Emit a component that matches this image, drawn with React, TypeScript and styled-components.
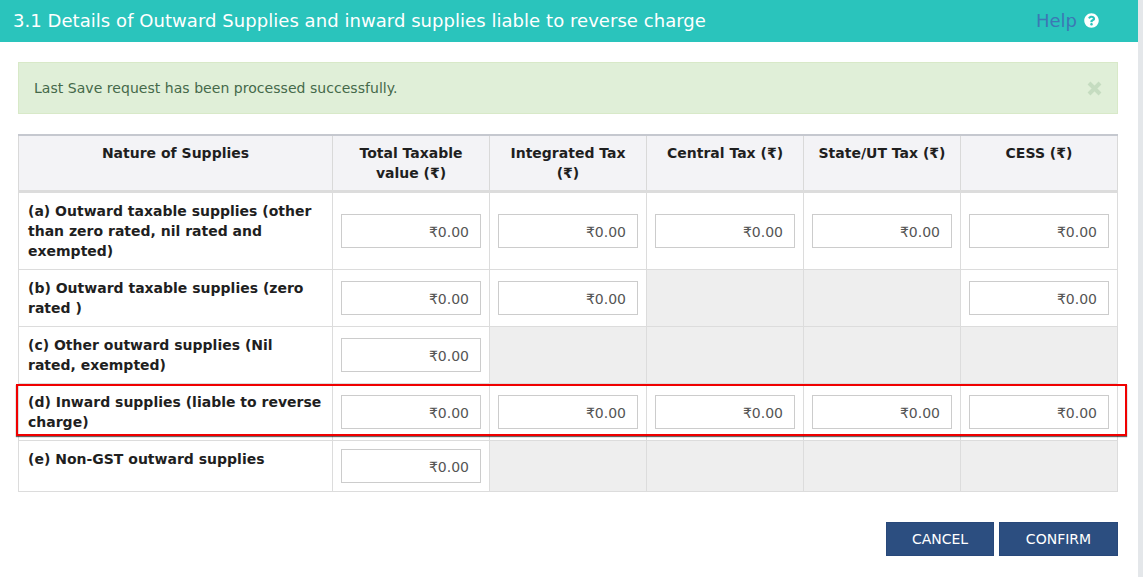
import React from 'react';
import styled, { createGlobalStyle } from 'styled-components';
import { FaQuestionCircle } from 'react-icons/fa';

const GlobalStyle = createGlobalStyle`
  html, body {
    margin: 0;
    padding: 0;
    background: #e4e7ea;
    overflow: hidden;
  }
  body {
    font-family: "DejaVu Sans", Verdana, sans-serif;
    color: #1f1f1f;
  }
`;

const Modal = styled.div`
  position: relative;
  width: 1138px;
  height: 577px;
  background: #fff;
`;

const Header = styled.div`
  height: 42px;
  box-sizing: border-box;
  padding: 0 39px 2px 13px;
  background: #2ac4bc;
  display: flex;
  align-items: center;
  justify-content: space-between;
`;

const Title = styled.h3`
  margin: 0;
  font-size: 18px;
  letter-spacing: 0.05px;
  font-weight: 400;
  color: #fff;
`;

const Help = styled.a`
  display: flex;
  align-items: center;
  gap: 7px;
  font-size: 18px;
  color: #3c78b4;
  svg {
    color: #fff;
  }
`;

const Body = styled.div`
  padding: 20px 20px 0 18px;
`;

const Alert = styled.div`
  height: 52px;
  box-sizing: border-box;
  display: flex;
  align-items: center;
  justify-content: space-between;
  padding: 0 15px;
  background: #e0efd8;
  border: 1px solid #d8e9c8;
  color: #45694a;
  font-size: 14px;
  letter-spacing: 0.04px;
`;

const Table = styled.table`
  margin-top: 20px;
  width: 1099px;
  border-collapse: collapse;
  table-layout: fixed;
  font-size: 14px;
`;

const Head = styled.th`
  height: 56px;
  box-sizing: border-box;
  vertical-align: top;
  padding: 7px 8px 0;
  line-height: 20px;
  font-weight: 700;
  background: #f3f3f6;
  border: 1px solid #d9d9d9;
  border-top: 2px solid #c5c8cf;
  border-bottom: 3px solid #dcdcdc;
`;

const Row = styled.tr<{ $height: number }>`
  height: ${p => p.$height}px;
`;

const Label = styled.td`
  box-sizing: border-box;
  vertical-align: top;
  padding: 8px 7px 0 9px;
  line-height: 20px;
  font-weight: 700;
  border: 1px solid #dcdcdc;
`;

const Cell = styled.td<{ $off?: boolean }>`
  box-sizing: border-box;
  vertical-align: middle;
  padding: 0 8px;
  border: 1px solid #dcdcdc;
  background: ${p => (p.$off ? '#eeeeee' : '#fff')};
`;

const Amount = styled.input`
  display: block;
  box-sizing: border-box;
  width: 140px;
  height: 34px;
  padding: 2px 11px 0;
  border: 1px solid #cccccc;
  background: #fff;
  text-align: right;
  font-family: inherit;
  font-size: 14px;
  color: #555;
`;

const Highlight = styled.div`
  position: absolute;
  left: 16px;
  top: 384px;
  width: 1111px;
  height: 52px;
  box-sizing: border-box;
  border: 2px solid #f00000;
  box-shadow: 0 1px 1px rgba(0, 0, 0, 0.6);
  pointer-events: none;
`;

const Actions = styled.div`
  display: flex;
  justify-content: flex-end;
  gap: 5px;
  margin-top: 30px;
`;

const Button = styled.button<{ $width: number }>`
  width: ${p => p.$width}px;
  height: 34px;
  border: 1px solid #28487a;
  background: #2c4e80;
  color: #fff;
  font-family: inherit;
  font-size: 14px;
  padding: 0;
`;

const rows = [
  { label: '(a) Outward taxable supplies (other than zero rated, nil rated and exempted)', height: 78, on: [1, 1, 1, 1, 1] },
  { label: '(b) Outward taxable supplies (zero rated )', height: 57, on: [1, 1, 0, 0, 1] },
  { label: '(c) Other outward supplies (Nil rated, exempted)', height: 57, on: [1, 0, 0, 0, 0] },
  { label: '(d) Inward supplies (liable to reverse charge)', height: 57, on: [1, 1, 1, 1, 1] },
  { label: '(e) Non-GST outward supplies', height: 51, on: [1, 0, 0, 0, 0] },
];

const heads = ['Total Taxable value (₹)', 'Integrated Tax (₹)', 'Central Tax (₹)', 'State/UT Tax (₹)', 'CESS (₹)'];

export default function App() {
  return (
    <Modal>
      <GlobalStyle />
      <Header>
        <Title>3.1 Details of Outward Supplies and inward supplies liable to reverse charge</Title>
        <Help>
          Help
          <FaQuestionCircle size={15} />
        </Help>
      </Header>
      <Body>
        <Alert>
          Last Save request has been processed successfully.
          <svg width="15" height="15" viewBox="0 0 15 15">
            <path d="M2 2l11 11M13 2L2 13" stroke="#c5dcc0" strokeWidth="4" />
          </svg>
        </Alert>
        <Table>
          <colgroup>
            <col style={{ width: 314 }} />
            <col span={5} style={{ width: 157 }} />
          </colgroup>
          <thead>
            <tr>
              <Head>Nature of Supplies</Head>
              {heads.map(h => (
                <Head key={h}>{h}</Head>
              ))}
            </tr>
          </thead>
          <tbody>
            {rows.map(r => (
              <Row key={r.label} $height={r.height}>
                <Label>{r.label}</Label>
                {r.on.map((on, i) => (
                  <Cell key={i} $off={!on}>
                    {on ? <Amount readOnly value="₹0.00" /> : null}
                  </Cell>
                ))}
              </Row>
            ))}
          </tbody>
        </Table>
        <Actions>
          <Button $width={108}>CANCEL</Button>
          <Button $width={119}>CONFIRM</Button>
        </Actions>
      </Body>
      <Highlight />
    </Modal>
  );
}
